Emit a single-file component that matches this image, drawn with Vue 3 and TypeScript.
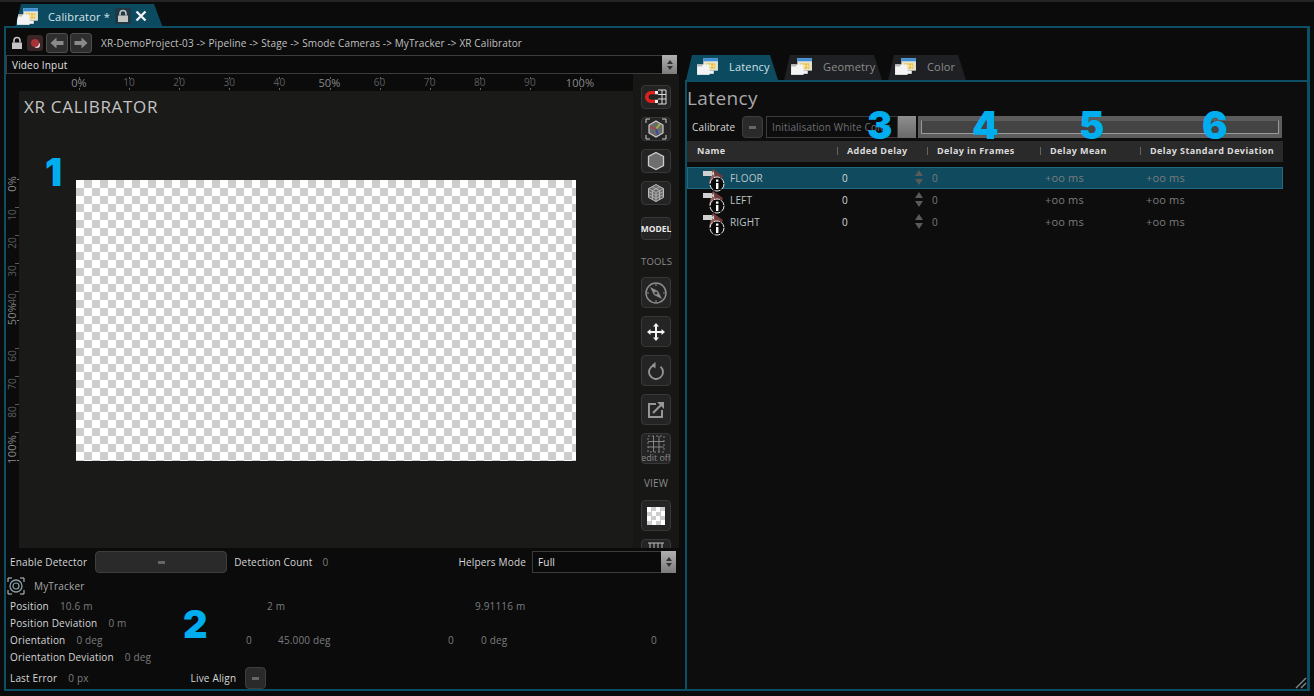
<template>
  <div class="app">
    <svg class="defs" width="0" height="0">
      <symbol id="win" viewBox="0 0 22 18">
        <rect x="7" y="1" width="14" height="12" fill="#e8e4d0" />
        <rect x="7" y="1" width="14" height="3" fill="#3f8fd6" />
        <rect x="9.5" y="6" width="9" height="5" fill="#e2b93c" />
        <path d="M11 6v5M14 6v5M17 6v5M9.5 8.5h9" stroke="#fff3b8" stroke-width=".7" />
        <rect x="1" y="7" width="12" height="10" fill="#f4f4f4" />
        <rect x="1" y="7" width="5" height="2" fill="#bbb" />
        <rect x="9" y="13" width="8" height="3" fill="#f4f4f4" />
      </symbol>
      <symbol id="lock" viewBox="0 0 14 14">
        <path d="M4 6.5V4.5a3 3 0 0 1 6 0v2" fill="none" stroke="#c4c4c4" stroke-width="1.6" />
        <rect x="2" y="6.5" width="10" height="6.5" fill="#c4c4c4" />
      </symbol>
      <symbol id="cam" viewBox="0 0 26 24">
        <path d="M8 15 12 1 22 8 16 22Z" fill="#6d3b3a" />
        <path d="M8 15 12 1 15 12Z" fill="#93605c" />
        <rect x="2" y="3" width="9" height="5" fill="#d0d0d0" />
        <path d="M11 5l2-1.5v4l-2-1.5z" fill="#d0d0d0" />
        <circle cx="16" cy="16" r="7" fill="#0a0a0a" stroke="#eee" stroke-width="1" stroke-dasharray="6 1.4" />
        <rect x="15" y="15" width="2.4" height="6" fill="#fff" />
        <rect x="15" y="11.5" width="2.4" height="2.2" fill="#fff" />
      </symbol>
    </svg>

    <div class="top-tabs">
      <div class="main-tab">
        <svg class="tab-icon"><use href="#win" /></svg>
        <span class="main-tab-label">Calibrator *</span>
        <span class="tab-lock"><svg width="14" height="14"><use href="#lock" /></svg></span>
        <svg class="tab-close" width="12" height="12" viewBox="0 0 12 12">
          <path d="M1.5 1.5l9 9M10.5 1.5l-9 9" stroke="#f2f2f2" stroke-width="2.4" />
        </svg>
      </div>
    </div>

    <div class="frame">
      <div class="path-bar">
        <div class="path-tools">
          <svg class="plain-lock" width="14" height="14"><use href="#lock" /></svg>
          <span class="rec-btn"><i class="rec-dot"></i></span>
          <span class="nav-btn">
            <svg width="14" height="12" viewBox="0 0 14 12"><path d="M0.5 6 6.5 0.5V4H13.5V8H6.5V11.5Z" fill="#8a8a8a" /></svg>
          </span>
          <span class="nav-btn">
            <svg width="14" height="12" viewBox="0 0 14 12"><path d="M13.5 6 7.5 0.5V4H0.5V8H7.5V11.5Z" fill="#8a8a8a" /></svg>
          </span>
        </div>
        <span class="path-text">XR-DemoProject-03 -&gt; Pipeline -&gt; Stage -&gt; Smode Cameras -&gt; MyTracker -&gt; XR Calibrator</span>
      </div>

      <div class="panes">
        <section class="left">
          <div class="select wide">
            <span>Video Input</span>
            <span class="select-arrows"><i class="up"></i><i class="down"></i></span>
          </div>

          <div class="stage">
            <div class="stage-main">
              <div class="ruler-top">
                <div v-for="m in topMarks" :key="m.label" class="htick" :style="{ left: m.pos + 'px' }">
                  <span :class="{ pct: m.pct }">{{ m.label }}</span>
                  <i></i>
                </div>
              </div>
              <div class="view">
                <div class="ruler-left">
                  <div v-for="m in leftMarks" :key="m.label" class="vtick" :class="{ dotted: m.pct }" :style="{ top: m.pos + 'px' }">
                    <span v-if="m.show" :class="{ pct: m.pct }" :style="{ top: m.shift + 'px' }">{{ m.label }}</span>
                  </div>
                </div>
                <div class="canvas">
                  <div class="canvas-title">XR CALIBRATOR</div>
                  <div class="checker"></div>
                </div>
              </div>
            </div>

            <div class="side">
              <button class="tool s24 first">
                <svg width="24" height="20" viewBox="0 0 24 20">
                  <path d="M13 4H7a5.5 5.5 0 0 0 0 12h6v-3.2H7.4a2.4 2.4 0 0 1 0-5.6H13Z" fill="#e0201c" />
                  <path d="M14 3h8v14h-8M18 3v14M14 7.5h8M14 12h8" fill="none" stroke="#ddd" stroke-width="1" />
                  <rect x="11" y="4" width="3" height="3.2" fill="#eee" />
                  <rect x="11" y="12.8" width="3" height="3.2" fill="#eee" />
                </svg>
              </button>
              <button class="tool s24">
                <svg width="22" height="22" viewBox="0 0 22 22">
                  <path d="M11 3 18 7V15L11 19 4 15V7Z" fill="#6a6a6a" stroke="#ccc" stroke-width="1.2" />
                  <path d="M11 11 15 6" stroke="#9ab83c" stroke-width="2" />
                  <path d="M11 11 5 9" stroke="#a04a4a" stroke-width="2" />
                  <path d="M11 11 13 17" stroke="#3a4aa0" stroke-width="2" />
                  <path d="M1 5V1h4M17 1h4v4M21 17v4h-4M5 21H1v-4" fill="none" stroke="#ccc" stroke-width="1" />
                </svg>
              </button>
              <button class="tool s24">
                <svg width="20" height="20" viewBox="0 0 20 20">
                  <path d="M10 1.5 17.5 5.5V14.5L10 18.5 2.5 14.5V5.5Z" fill="#6e6e6e" stroke="#ccc" stroke-width="1.3" />
                </svg>
              </button>
              <button class="tool s24">
                <svg width="20" height="20" viewBox="0 0 20 20">
                  <path d="M10 1.5 17.5 5.5V14.5L10 18.5 2.5 14.5V5.5Z" fill="#6a6a6a" stroke="#bbb" stroke-width="1" />
                  <path d="M2.5 5.5 10 9.5 17.5 5.5M10 9.5V18.5M6 3.6 13.5 7.6V16.6M14 3.6 6.5 7.6V16.6M2.5 8.5 10 12.5 17.5 8.5M2.5 11.5 10 15.5 17.5 11.5" fill="none" stroke="#bbb" stroke-width=".8" />
                </svg>
              </button>
              <button class="tool model">MODEL</button>
              <div class="side-label tools-label">TOOLS</div>
              <button class="tool s31">
                <svg width="24" height="24" viewBox="0 0 24 24">
                  <circle cx="12" cy="12" r="10" fill="none" stroke="#8c8c8c" stroke-width="1.5" />
                  <path d="M6 6 14 10 18 18 10 14Z" fill="#8c8c8c" />
                  <circle cx="12" cy="12" r="1.6" fill="#333" />
                  <path d="M12 3v2M21 12h-2M12 21v-2M3 12h2" stroke="#8c8c8c" />
                </svg>
              </button>
              <button class="tool s31">
                <svg width="18" height="18" viewBox="0 0 18 18">
                  <path d="M9 0 12 3.5H10V8H14.5V6L18 9 14.5 12V10H10V14.5H12L9 18 6 14.5H8V10H3.5V12L0 9 3.5 6V8H8V3.5H6Z" fill="#f2f2f2" />
                </svg>
              </button>
              <button class="tool s31">
                <svg width="18" height="18" viewBox="0 0 18 18">
                  <path d="M7 3.3A7 7 0 1 0 13.5 4.6" fill="none" stroke="#969696" stroke-width="1.8" />
                  <path d="M8.5 0 8.5 6.5 4.5 3.2Z" fill="#969696" />
                </svg>
              </button>
              <button class="tool s31">
                <svg width="18" height="18" viewBox="0 0 18 18">
                  <path d="M9 3H2v13h13V9" fill="none" stroke="#969696" stroke-width="2" />
                  <path d="M6 12 15 3" stroke="#969696" stroke-width="2.2" />
                  <path d="M10 1h7v7Z" fill="#969696" />
                </svg>
              </button>
              <button class="tool s31 edit">
                <svg width="18" height="18" viewBox="0 0 18 18">
                  <path d="M6.5 1v16M12 1v16M1 6.5h16M1 12h16" stroke="#9a9a9a" stroke-width=".8" />
                  <path d="M1 1h16v16H1Z" fill="none" stroke="#9a9a9a" stroke-width=".8" stroke-dasharray="2 2" />
                </svg>
                <span>edit off</span>
              </button>
              <div class="side-label view-label">VIEW</div>
              <button class="tool s31"><span class="mini-check"></span></button>
              <button class="tool s31 clipped">
                <svg width="18" height="18" viewBox="0 0 18 18">
                  <path d="M1 3h16M3 3v9M7 3v9M11 3v9M15 3v9" stroke="#bbb" stroke-width="1" />
                </svg>
              </button>
            </div>
          </div>

          <div class="props">
            <div class="row detector">
              <span class="lbl">Enable Detector</span>
              <button class="toggle long"><i></i></button>
              <span class="lbl">Detection Count</span>
              <span class="val count">0</span>
              <span class="lbl helpers">Helpers Mode</span>
              <div class="select mode">
                <span>Full</span>
                <span class="select-arrows"><i class="up"></i><i class="down"></i></span>
              </div>
            </div>
            <div class="tracker">
              <svg width="18" height="18" viewBox="0 0 18 18">
                <circle cx="9" cy="9" r="6" fill="none" stroke="#8aa0a6" stroke-width="1.3" />
                <circle cx="9" cy="9" r="3" fill="none" stroke="#8aa0a6" stroke-width="1.2" />
                <path d="M1 5V1h4M13 1h4v4M17 13v4h-4M5 17H1v-4" fill="none" stroke="#ccc" stroke-width="1" />
              </svg>
              <span class="val name">MyTracker</span>
            </div>
            <div class="vec pos-row">
              <div><span class="lbl">Position</span><span class="val">10.6 m</span></div>
              <span class="val">2 m</span>
              <span class="val">9.91116 m</span>
            </div>
            <div class="vec single">
              <div><span class="lbl">Position Deviation</span><span class="val">0 m</span></div>
            </div>
            <div class="vec ori-row">
              <div><span class="lbl">Orientation</span><span class="val">0 deg</span></div>
              <span class="val">0</span>
              <span class="val">45.000 deg</span>
              <span class="val">0</span>
              <span class="val">0 deg</span>
              <span class="val">0</span>
            </div>
            <div class="vec single">
              <div><span class="lbl">Orientation Deviation</span><span class="val">0 deg</span></div>
            </div>
            <div class="row last">
              <span class="lbl">Last Error</span>
              <span class="val err">0 px</span>
              <span class="lbl live">Live Align</span>
              <button class="toggle small"><i></i></button>
            </div>
          </div>
        </section>

        <section class="right">
          <div class="tabs">
            <div
              v-for="(t, i) in tabs"
              :key="t.name"
              class="tab"
              :class="{ active: i === 0 }"
              :style="{ width: t.width + 'px' }"
            >
              <svg class="tab-icon"><use href="#win" /></svg>
              <span>{{ t.name }}</span>
            </div>
          </div>
          <div class="panel">
            <h1>Latency</h1>
            <div class="calibrate">
              <span class="lbl">Calibrate</span>
              <button class="toggle small"><i></i></button>
              <div class="init">Initialisation White Color</div>
              <span class="thumb"></span>
              <div class="progress"><i></i></div>
            </div>
            <div class="thead">
              <span>Name</span>
              <span>Added Delay</span>
              <span>Delay in Frames</span>
              <span>Delay Mean</span>
              <span>Delay Standard Deviation</span>
            </div>
            <div class="rows">
              <div v-for="(c, i) in cameras" :key="c" class="trow" :class="{ selected: i === 0 }">
                <svg class="cam" width="26" height="24"><use href="#cam" /></svg>
                <span class="cam-name">{{ c }}</span>
                <span class="cell-added">0</span>
                <span class="spin"><i class="up"></i><i class="down"></i></span>
                <span class="cell-frames">0</span>
                <span class="cell-mean">+oo ms</span>
                <span class="cell-dev">+oo ms</span>
              </div>
            </div>
          </div>
        </section>
      </div>
      <svg class="grip" width="14" height="14" viewBox="0 0 14 14">
        <path d="M13 3 3 13M13 8 8 13" stroke="#7a8a90" stroke-width="1.4" />
      </svg>
    </div>

    <span v-for="n in notes" :key="n.text" class="note" :style="{ left: n.x + 'px', top: n.y + 'px' }">{{ n.text }}</span>
  </div>
</template>

<script setup lang="ts">
const tickLabels = ["0%", "10", "20", "30", "40", "50%", "60", "70", "80", "90", "100%"];

const topMarks = tickLabels.map((label, i) => ({
  label,
  pos: 73 + i * 50.1,
  pct: label.includes("%"),
}));

// percent labels sit across their tick, the 90 label is hidden behind 100%
const leftShift: Record<string, number> = { "0%": -3, "50%": -17, "100%": -25 };

const leftMarks = tickLabels.map((label, i) => ({
  label,
  pos: 88 + i * 28.1,
  pct: label.includes("%"),
  show: label !== "90",
  shift: leftShift[label] ?? 2,
}));

const tabs = [
  { name: "Latency", width: 98 },
  { name: "Geometry", width: 104 },
  { name: "Color", width: 84 },
];

const cameras = ["FLOOR", "LEFT", "RIGHT"];

const notes = [
  { text: "1", x: 45, y: 149 },
  { text: "2", x: 183, y: 601 },
  { text: "3", x: 867, y: 102 },
  { text: "4", x: 972, y: 102 },
  { text: "5", x: 1079, y: 102 },
  { text: "6", x: 1202, y: 102 },
];
</script>

<style>
html,
body {
  margin: 0;
  background: #0b0b0c;
}
</style>

<style scoped>
.app {
  position: relative;
  width: 1314px;
  height: 696px;
  overflow: hidden;
  display: flex;
  flex-direction: column;
  background: #0b0b0c;
  color: #d8d8d8;
  font-family: "Open Sans", "Liberation Sans", sans-serif;
  font-size: 10px;
  letter-spacing: 0.17px;
}

.defs {
  position: absolute;
}

button {
  padding: 0;
  font: inherit;
  cursor: default;
}

.top-tabs {
  height: 26px;
  box-sizing: border-box;
  padding: 2px 0 0 15px;
  border-top: 2px solid #232426;
  flex: none;
}

.main-tab {
  width: 148px;
  height: 24px;
  display: flex;
  align-items: center;
  box-sizing: border-box;
  padding-left: 1px;
  background: #0c4a60;
  clip-path: polygon(0 100%, 6px 0, 139px 0, 100% 100%);
}

.tab-icon {
  width: 23px;
  height: 19px;
  flex: none;
}

.main-tab-label {
  margin-left: 9px;
  font-size: 11px;
  color: #d8e4e8;
}

.tab-lock {
  width: 16px;
  height: 16px;
  margin-left: 5px;
  background: #203844;
  display: flex;
  align-items: center;
  justify-content: center;
}

.tab-close {
  margin-left: 4px;
}

.frame {
  position: relative;
  flex: 1;
  min-height: 0;
  margin: 0 4px 5px;
  border: 2px solid #0c4f64;
  border-right-width: 3px;
  display: flex;
  flex-direction: column;
}

.path-bar {
  height: 27px;
  box-sizing: border-box;
  padding: 3px 0 0 4px;
  flex: none;
  display: flex;
  align-items: center;
}

.path-tools {
  display: flex;
  align-items: center;
  gap: 3px;
}

.rec-btn {
  width: 16px;
  height: 16px;
  border-radius: 3px;
  background: #3a2626;
  display: flex;
  align-items: center;
  justify-content: center;
}

.rec-dot {
  width: 8px;
  height: 8px;
  border-radius: 50%;
  background: #a8343a;
  box-shadow: 2px 2px 0 -1px #ddd;
}

.nav-btn {
  width: 22px;
  height: 20px;
  margin-right: -1px;
  box-sizing: border-box;
  border: 1px solid #4e4e4e;
  border-radius: 3px;
  background: #2e2e2e;
  display: flex;
  align-items: center;
  justify-content: center;
}

.path-text {
  margin-left: 10px;
  color: #c0c0c0;
  font-size: 10px;
  letter-spacing: 0.13px;
}

.panes {
  flex: 1;
  min-height: 0;
  display: flex;
}

.left {
  width: 673px;
  flex: none;
  display: flex;
  flex-direction: column;
}

.select {
  display: flex;
  align-items: center;
  justify-content: space-between;
  box-sizing: border-box;
  padding-left: 5px;
  border: 1px solid #3c3c3c;
  background: #0a0a0a;
  color: #e0e0e0;
}

.select.wide {
  height: 19px;
  margin-right: 2px;
  flex: none;
}

.select-arrows {
  width: 15px;
  align-self: stretch;
  margin: -1px -1px -1px 0;
  background: linear-gradient(#b0b0b0, #7c7c7c);
  display: flex;
  flex-direction: column;
  align-items: center;
  justify-content: center;
  gap: 2px;
}

.up,
.down {
  width: 0;
  height: 0;
  border-left: 3.5px solid transparent;
  border-right: 3.5px solid transparent;
}

.select-arrows .up {
  border-bottom: 4px solid #333;
}

.select-arrows .down {
  border-top: 4px solid #333;
}

.stage {
  height: 474px;
  flex: none;
  display: flex;
  background: #171716;
}

.stage-main {
  width: 627px;
  flex: none;
  display: flex;
  flex-direction: column;
}

.ruler-top {
  position: relative;
  height: 17px;
  flex: none;
  overflow: hidden;
  background: #0b0b0c;
}

.htick {
  position: absolute;
  top: 3px;
  width: 34px;
  margin-left: -17px;
  text-align: center;
  font-size: 10px;
  line-height: 11px;
  color: #5c5c5c;
}

.htick i {
  position: absolute;
  left: 17px;
  top: 0;
  width: 1px;
  height: 14px;
  background: repeating-linear-gradient(#666 0 2px, transparent 2px 11px);
}

.htick .pct {
  font-size: 11px;
  color: #8a8a8a;
}

.view {
  flex: 1;
  min-height: 0;
  display: flex;
}

.ruler-left {
  position: relative;
  width: 13px;
  flex: none;
  background: #0b0b0c;
}

.vtick {
  position: absolute;
  right: 0;
  width: 4px;
  height: 1px;
  background: #5a5a5a;
}

.vtick.dotted {
  width: 2px;
  background: #888;
}

.vtick span {
  position: absolute;
  right: 1px;
  writing-mode: vertical-rl;
  transform: rotate(180deg);
  font-size: 10px;
  line-height: 12px;
  color: #5c5c5c;
}

.vtick .pct {
  font-size: 11px;
  color: #8a8a8a;
}

.canvas {
  flex: 1;
  min-width: 0;
  background: #1a1a19;
  padding: 6px 0 0 57px;
}

.canvas-title {
  margin-left: -52px;
  height: 83px;
  font-size: 17px;
  line-height: 20px;
  letter-spacing: 0.7px;
  color: #c4c4c4;
}

.checker {
  width: 500px;
  height: 281px;
  background: repeating-conic-gradient(#cdcdcd 0 25%, #fff 0 50%) 0 0 / 16px 16px;
}

.side {
  flex: 1;
  min-width: 0;
  overflow: hidden;
  display: flex;
  flex-direction: column;
  align-items: flex-start;
  padding: 11px 0 0 8px;
  box-sizing: border-box;
}

.tool {
  width: 30px;
  flex: none;
  border: 1px solid #383838;
  border-radius: 4px;
  background: #242424;
  display: flex;
  flex-direction: column;
  align-items: center;
  justify-content: center;
}

.s24 {
  height: 24px;
  margin-bottom: 8px;
}

.model {
  height: 23px;
  margin-top: 4px;
  color: #eaeaea;
  font-size: 8.5px;
  font-weight: 700;
  letter-spacing: 0;
}

.side-label {
  width: 30px;
  text-align: center;
  color: #8a8a8a;
  font-size: 9.5px;
  line-height: 12px;
}

.tools-label {
  margin: 16px 0 9px;
}

.view-label {
  margin: 13px 0 11px;
  font-size: 10px;
}

.s31 {
  height: 31px;
  margin-bottom: 8px;
}

.edit {
  margin-bottom: 0;
  justify-content: flex-start;
  overflow: hidden;
  padding-top: 1px;
}

.edit span {
  color: #8a8a8a;
  font-size: 9px;
  line-height: 9px;
  white-space: nowrap;
  letter-spacing: 0;
}

.mini-check {
  width: 18px;
  height: 18px;
  background: repeating-conic-gradient(#cdcdcd 0 25%, #fff 0 50%) 0 0 / 9px 9px;
}

.clipped {
  justify-content: flex-start;
}

.props {
  flex: 1;
  min-height: 0;
  padding: 3px 0 0 4px;
}

.lbl {
  color: #d6d6d6;
  white-space: nowrap;
}

.val {
  color: #7c7c7c;
  white-space: nowrap;
}

.row {
  display: flex;
  align-items: center;
}

.detector {
  height: 22px;
}

.toggle {
  border: 1px solid #3e3e3e;
  border-radius: 4px;
  background: #2a2a2a;
  display: flex;
  align-items: center;
  justify-content: center;
  flex: none;
}

.toggle i {
  width: 7px;
  height: 3px;
  background: #666;
}

.toggle.long {
  width: 132px;
  height: 22px;
  margin: 0 7px 0 8px;
}

.toggle.small {
  width: 21px;
  height: 22px;
}

.count {
  margin-left: 10px;
}

.helpers {
  margin-left: auto;
}

.select.mode {
  width: 144px;
  height: 22px;
  margin: 0 3px 0 6px;
}

.tracker {
  height: 18px;
  margin: 4px 0 0 -3px;
  display: flex;
  align-items: center;
}

.name {
  margin-left: 9px;
  color: #a8a8a8;
}

.vec {
  height: 17px;
  display: grid;
  align-items: center;
}

.vec .lbl {
  margin-right: 11px;
}

.pos-row {
  margin-top: 2px;
  grid-template-columns: 257px 208px 1fr;
}

.ori-row {
  grid-template-columns: 236px 32px 170px 33px 170px 1fr;
}

.last {
  height: 22px;
  margin-top: 2px;
}

.err {
  margin-left: 11px;
}

.live {
  margin-left: 102px;
  margin-right: 9px;
}

.right {
  margin-left: 6px;
  flex: 1;
  min-width: 0;
  display: flex;
  flex-direction: column;
}

.tabs {
  height: 25px;
  flex: none;
  display: flex;
  padding-left: 1px;
}

.tab {
  height: 25px;
  box-sizing: border-box;
  padding: 0 0 2px 6px;
  display: flex;
  align-items: center;
  gap: 10px;
  font-size: 11px;
  color: #8c8c8c;
  background: #1e2023;
  clip-path: polygon(0 100%, 6px 0, calc(100% - 14px) 0, calc(100% - 6px) 100%);
}

.tab.active {
  padding-left: 10px;
  background: #0c4a60;
  color: #cfe0e6;
}

.panel {
  flex: 1;
  min-height: 0;
  border-top: 2px solid #0c4f64;
  border-left: 2px solid #0c4f64;
  background: #0d0d0e;
}

h1 {
  margin: 0;
  height: 34px;
  box-sizing: border-box;
  padding-top: 4px;
  font-size: 19px;
  line-height: 24px;
  letter-spacing: 0.4px;
  font-weight: 400;
  color: #a8a8a8;
}

.calibrate {
  height: 25px;
  display: flex;
  align-items: flex-start;
  padding-left: 5px;
}

.calibrate .lbl {
  width: 50px;
  line-height: 22px;
}

.init {
  width: 132px;
  height: 22px;
  box-sizing: border-box;
  margin-left: 3px;
  padding-left: 5px;
  border: 1px solid #3c3c3c;
  line-height: 20px;
  color: #707070;
  white-space: nowrap;
  overflow: hidden;
}

.thumb {
  width: 18px;
  height: 22px;
  background: linear-gradient(#8e8e8e, #6a6a6a);
}

.progress {
  width: 364px;
  height: 22px;
  margin-left: 2px;
  box-sizing: border-box;
  padding: 4px 3px;
  background: #5c5c5c;
}

.progress i {
  display: block;
  height: 14px;
  box-sizing: border-box;
  border: 1px solid #9a9a9a;
  border-top-color: #5c5c5c;
  background: #444;
}

.thead {
  width: 596px;
  height: 21px;
  background: #2a2a2b;
  font-size: 9px;
  font-weight: 700;
  line-height: 19px;
  color: #dcdcdc;
  letter-spacing: 0.4px;
  display: grid;
  grid-template-columns: 150px 90px 113px 100px 1fr;
}

.thead span {
  position: relative;
  padding-left: 10px;
  white-space: nowrap;
}

.thead span + span::before {
  content: "";
  position: absolute;
  left: 0;
  top: 6px;
  width: 1px;
  height: 8px;
  background: #666;
}

.rows {
  width: 596px;
  margin-top: 5px;
}

.trow {
  height: 22px;
  box-sizing: border-box;
  display: flex;
  align-items: center;
  border: 1px solid transparent;
  position: relative;
}

.trow.selected {
  background: #0f4a5e;
  border-color: #1f6a80;
}

.trow span {
  position: absolute;
  top: 3px;
  line-height: 15px;
}

.cam {
  position: absolute;
  left: 13px;
  top: 0;
}

.cam-name {
  left: 42px;
  color: #bcc4c6;
}

.cell-added {
  left: 154px;
  color: #d8d8d8;
}

.trow .spin {
  left: 227px;
  top: 2px;
  display: flex;
  flex-direction: column;
  gap: 3px;
}

.spin .up {
  border-left-width: 4px;
  border-right-width: 4px;
  border-bottom: 6px solid #5a5a5a;
}

.spin .down {
  border-left-width: 4px;
  border-right-width: 4px;
  border-top: 6px solid #5a5a5a;
}

.cell-frames {
  left: 244px;
  color: #7c7c7c;
}

.trow .cell-mean {
  left: 357px;
  top: 2px;
  color: #7c7c7c;
  font-size: 11px;
}

.trow .cell-dev {
  left: 458px;
  top: 2px;
  color: #7c7c7c;
  font-size: 11px;
}

.grip {
  position: absolute;
  right: 0;
  bottom: 0;
}

.note {
  position: absolute;
  font-family: Inter, "Open Sans", sans-serif;
  font-size: 38px;
  font-weight: 900;
  line-height: 46px;
  letter-spacing: 0;
  color: #00aeef;
}
</style>
